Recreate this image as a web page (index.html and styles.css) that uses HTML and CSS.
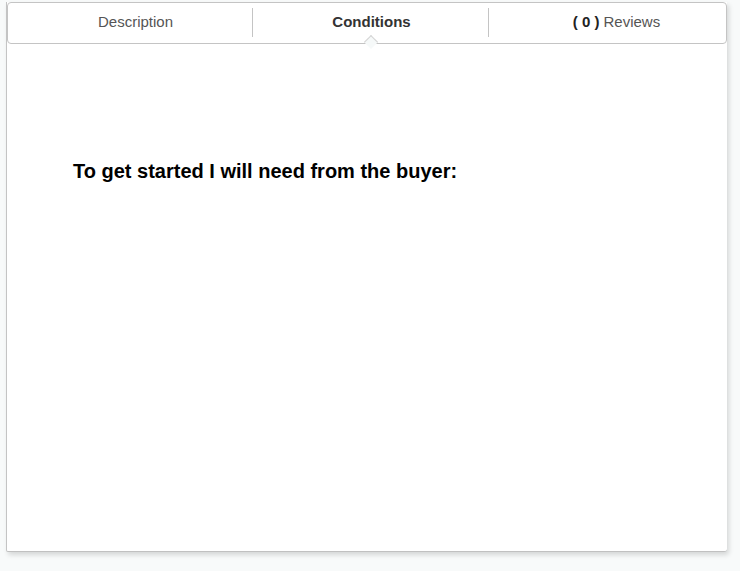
FILE: index.html
```html
<!DOCTYPE html>
<html>
<head>
<meta charset="utf-8">
<link rel="stylesheet" href="styles.css">
</head>
<body>
<div class="panel">
  <div class="tabs">
    <div class="tab tab-desc">Description</div>
    <div class="tab tab-cond active">Conditions<span class="caret"></span></div>
    <div class="tab tab-rev"><b>( 0 )</b> Reviews</div>
  </div>
  <div class="content">
    <h2 class="title">To get started I will need from the buyer:</h2>
  </div>
</div>
</body>
</html>
```
FILE: styles.css
```css
html, body { margin: 0; padding: 0; }
body {
  background: #f8fafa;
  width: 740px;
  height: 571px;
  overflow: hidden;
  font-family: "Liberation Sans", Arial, sans-serif;
}
.panel {
  margin: 2px 0 0 6px;
  width: 720px;
  height: 549px;
  background: #fff;
  border-left: 1px solid #c4c4c4;
  border-bottom: 1px solid #c0c0c0;
  border-bottom-left-radius: 2px;
  border-bottom-right-radius: 3px;
  box-shadow: 2px 3px 5px rgba(0,0,0,0.14);
  position: relative;
}
.tabs {
  display: flex;
  height: 40px;
  border: 1px solid #c4c4c4;
  border-radius: 4px;
  background: #fff;
}
.tab {
  display: flex;
  align-items: center;
  justify-content: center;
  font-size: 15px;
  color: #555;
  position: relative;
}
.tab-desc { width: 244px; padding-left: 11px; box-sizing: border-box; }
.tab-cond {
  width: 237px;
  padding-left: 2px;
  font-weight: bold;
  color: #333;
  border-left: 1px solid #c4c4c4;
  border-right: 1px solid #c4c4c4;
  height: 29px;
  margin-top: 5px;
  padding-bottom: 3px;
  box-sizing: border-box;
  align-self: flex-start;
}
.tab-desc, .tab-rev { height: 40px; padding-bottom: 4px; box-sizing: border-box; }
.tab-rev { flex: 1; padding-left: 18px; }
.tab-rev b { color: #222; margin-right: 4px; }
.caret {
  position: absolute;
  left: 50%;
  bottom: -10px;
  width: 9px;
  height: 9px;
  margin-left: -5px;
  background: #f6f9f9;
  border-left: 1px solid #d4d4d4;
  border-top: 1px solid #d4d4d4;
  transform: rotate(45deg);
}
.content { padding: 116px 0 0 66px; }
.title {
  margin: 0;
  font-size: 20px;
  font-weight: bold;
  color: #000;
}
```
